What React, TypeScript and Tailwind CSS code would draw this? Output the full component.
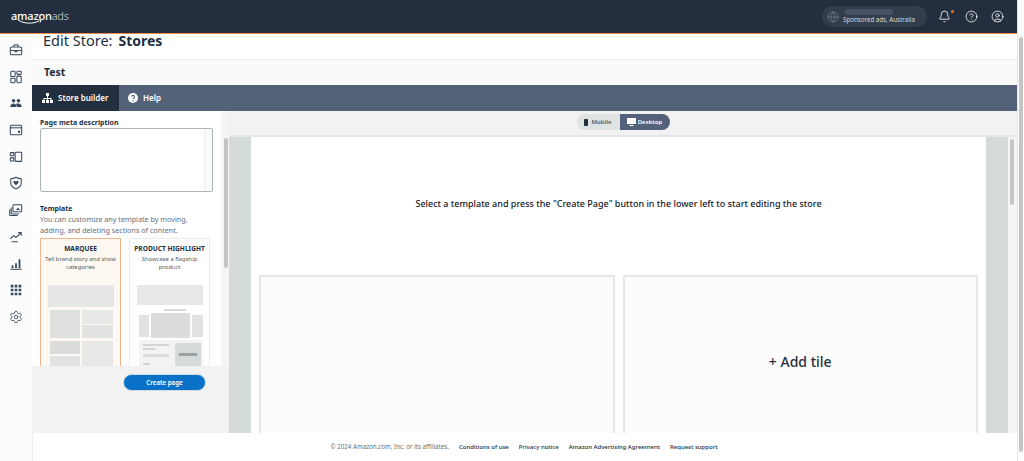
import type { ReactNode } from "react";
import { Bell, CircleHelp, CircleUser, Globe, Settings } from "lucide-react";

const FOOTER_LINKS = ["Conditions of use", "Privacy notice", "Amazon Advertising Agreement", "Request support"];

function NavIcon({ children }: { children: ReactNode }) {
  return (
    <svg width="14" height="14" viewBox="0 0 16 16" fill="none" stroke="#37475a" strokeWidth="1.2">
      {children}
    </svg>
  );
}

// rail icons are not in lucide in this shape, so they are drawn by hand
const NAV_ICONS = [
  <NavIcon key="briefcase">
    <rect x="1.5" y="4.5" width="13" height="9" rx="1.5" />
    <path d="M5.5 4.5V3a1 1 0 0 1 1-1h3a1 1 0 0 1 1 1v1.5M1.5 8.5h13M7 8.5v1.5h2V8.5" />
  </NavIcon>,
  <NavIcon key="boards">
    <rect x="2" y="1.5" width="5" height="6" rx="1" />
    <rect x="2" y="9.5" width="5" height="5" rx="1" />
    <rect x="9" y="1.5" width="5" height="3.5" rx="1" />
    <rect x="9" y="7" width="5" height="7.5" rx="1" />
  </NavIcon>,
  <NavIcon key="people">
    <g fill="#37475a" stroke="none">
      <circle cx="5.2" cy="5.5" r="2" />
      <circle cx="10.8" cy="5.5" r="2" />
      <path d="M1.5 12.5c0-2.5 1.5-4 3.7-4s3 1 3 4zM8.8 12.5c0-1.500-.3-2.700-1-3.400.8-.5 1.800-.6 3-.6 2.200 0 3.700 1.500 3.700 4z" />
    </g>
  </NavIcon>,
  <NavIcon key="wallet">
    <rect x="1.5" y="2.5" width="13" height="11" rx="1.5" />
    <path d="M1.500 5.500h13" />
    <circle cx="11.500" cy="10" r=".8" fill="#37475a" />
  </NavIcon>,
  <NavIcon key="placements">
    <rect x="1.500" y="3" width="4" height="3.500" rx=".6" />
    <rect x="1.500" y="9" width="4" height="3.500" rx=".6" />
    <rect x="7" y="2.500" width="7.500" height="10.500" rx=".8" />
  </NavIcon>,
  <NavIcon key="shield">
    <path d="M8 1.500c2 1.300 4 1.700 6 1.700v4.800c0 3.200-2.500 5.400-6 6.500-3.500-1.100-6-3.300-6-6.500V3.200c2 0 4-.4 6-1.700z" />
    <path d="M8 10.500 5.400 7.900a1.400 1.400 0 0 1 2.100-1.900l.5.500.5-.5a1.400 1.400 0 0 1 2.100 1.900z" fill="#37475a" stroke="none" />
  </NavIcon>,
  <NavIcon key="creatives">
    <rect x="4.500" y="2" width="10" height="8" rx="1" />
    <path d="M2.500 5v6.500a1 1 0 0 0 1 1h8M.8 7.500v5.800a1 1 0 0 0 1 1h8" />
    <path d="m8 8 2-2.500L13 8z" fill="#37475a" stroke="none" />
  </NavIcon>,
  <NavIcon key="trend">
    <path d="m1.500 10 4-3.500 2.500 2 5.500-5M10.500 3h3.500v3.500M3 13.500h7" />
  </NavIcon>,
  <NavIcon key="bars">
    <path d="M1.500 14h13" />
    <path d="M3 9.500h2v3H3zM7 7h2v5.500H7zM11 2.500h2v10h-2z" fill="#37475a" stroke="none" />
  </NavIcon>,
  <NavIcon key="apps">
    <path d="M2 2h3v3H2zM6.500 2h3v3h-3zM11 2h3v3h-3zM2 6.500h3v3H2zM6.500 6.500h3v3h-3zM11 6.500h3v3h-3zM2 11h3v3H2zM6.500 11h3v3h-3zM11 11h3v3h-3z" fill="#37475a" stroke="none" />
  </NavIcon>,
  <Settings key="settings" size={14} strokeWidth={1.4} className="text-[#37475a]" />,
];

function MarqueeThumb() {
  return (
    <svg width="66" height="82" viewBox="0 0 66 82" className="mt-[14px] mx-auto block">
      <rect x="0" y="0" width="66" height="4" fill="#e8e8e8" />
      <rect x="0" y="4" width="66" height="18" fill="#e6e6e6" />
      <rect x="2" y="25" width="30" height="28" fill="#dfdfdf" />
      <rect x="34" y="25" width="31" height="14" fill="#e8e8e8" />
      <rect x="34" y="40" width="31" height="13" fill="#e2e2e2" />
      <rect x="2" y="56" width="30" height="13" fill="#dcdcdc" />
      <rect x="34" y="56" width="31" height="26" fill="#e8e8e8" />
      <rect x="2" y="71" width="30" height="11" fill="#e2e2e2" />
    </svg>
  );
}

function HighlightThumb() {
  return (
    <svg width="66" height="82" viewBox="0 0 66 82" className="mt-[14px] mx-auto block">
      <rect x="0" y="0" width="66" height="4" fill="#e8e8e8" />
      <rect x="0" y="4" width="66" height="16" fill="#e8e8e8" />
      <rect x="27" y="24" width="22" height="2" fill="#d8d8d8" />
      <rect x="2" y="30" width="10" height="22" fill="#e2e2e2" />
      <rect x="14" y="28" width="39" height="25" fill="#dcdcdc" />
      <rect x="55" y="30" width="11" height="22" fill="#e2e2e2" />
      <rect x="2" y="55" width="64" height="27" fill="#f3f3f3" />
      <rect x="6" y="59" width="26" height="2" fill="#d4d4d4" />
      <rect x="6" y="63" width="12" height="2" fill="#d4d4d4" />
      <rect x="6" y="69" width="26" height="3" fill="#dddddd" />
      <rect x="6" y="78" width="7" height="2" fill="#d4d4d4" />
      <rect x="38" y="58" width="26" height="24" fill="#d5dbdb" />
      <rect x="42" y="68" width="18" height="3" fill="#9aa3a3" />
    </svg>
  );
}

export default function App() {
  return (
    <div className="w-[1024px] h-[461px] flex overflow-hidden bg-white font-['Noto_Sans',sans-serif] text-[#16191f]">
      <div className="w-[1017px] flex flex-col">
        {/* Top bar */}
        <header className="h-[34px] shrink-0 bg-[#232f3e] border-b-[1.5px] border-[#f08a4b] flex items-center pl-[11px] pr-[13px]">
          <div className="relative text-white text-[11px] leading-none tracking-[-0.2px] -mt-[2px]">
            <span className="font-medium">amazon</span>
            <span className="font-light text-[#d5dbdb]">ads</span>
            <svg width="26" height="6" viewBox="0 0 26 6" className="absolute left-[6px] top-[9px]">
              <path d="M1 1c6 4 15 4 21 1M22 1l2 .5-1 2" fill="none" stroke="#fff" strokeWidth="1" />
            </svg>
          </div>
          <div className="ml-auto w-[105px] h-[21px] rounded-full bg-[#323e4e] flex items-center pl-[5px] gap-[4px]">
            <Globe size={12} strokeWidth={1} className="text-[#8d96a3]" />
            <div className="flex flex-col gap-[1px]">
              <div className="w-[48px] h-[6px] rounded-sm bg-[#465263] ml-[2px]" />
              <div className="text-[6.2px] leading-[8px] text-[#d5dbdb]">Sponsored ads, Australia</div>
            </div>
          </div>
          <div className="ml-[11px] relative">
            <Bell size={13} strokeWidth={1.5} className="text-white" />
            <div className="absolute -right-[3px] top-[0px] w-[3px] h-[3px] rounded-full bg-[#ec7211]" />
          </div>
          <CircleHelp size={13} strokeWidth={1.5} className="text-white ml-[14px]" />
          <CircleUser size={13} strokeWidth={1.5} className="text-white ml-[13px]" />
        </header>

        <div className="flex-1 flex min-h-0">
          {/* Left rail */}
          <nav className="w-[32px] shrink-0 bg-[#fcfcfc] flex flex-col items-center pt-[9px] gap-[12.7px]">
            {NAV_ICONS}
          </nav>

          <div className="flex-1 flex flex-col min-w-0">
            <div className="flex-1 flex flex-col min-h-0">
              <div className="h-[25px] shrink-0 bg-white pl-[11px] flex items-start">
                <h1 className="text-[14.5px] leading-[13px] text-[#232f3e]">
                  Edit Store:<span className="font-bold text-[14px] ml-[6px]">Stores</span>
                </h1>
              </div>
              <div className="h-[26px] shrink-0 bg-[#fafafa] border-t border-[#eaeded] pl-[12px] flex items-center text-[10.5px] font-bold text-[#232f3e]">
                Test
              </div>

              {/* Tabs */}
              <div className="h-[26px] shrink-0 bg-[#536179] flex text-white text-[8px] font-semibold">
                <div className="w-[87px] bg-[#232f3e] flex items-center pl-[10px] gap-[5px]">
                  <svg width="11" height="10" viewBox="0 0 11 10" fill="#fff">
                    <path d="M4 0h3v3H4zM0 7h3v3H0zM4 7h3v3H4zM8 7h3v3H8zM5 3h1v2h3.500v2h-1V6H6v1H5V6H2.500v1h-1V5H5z" />
                  </svg>
                  Store builder
                </div>
                <div className="flex items-center pl-[9px] gap-[5px]">
                  <svg width="10" height="10" viewBox="0 0 10 10">
                    <circle cx="5" cy="5" r="5" fill="#fff" />
                    <path d="M3.500 3.800a1.500 1.400 0 1 1 2.300 1.200c-.6.400-.8.600-.8 1.100" fill="none" stroke="#536179" strokeWidth="1.100" />
                    <circle cx="5" cy="7.800" r=".7" fill="#536179" />
                  </svg>
                  Help
                </div>
              </div>

              <div className="flex-1 flex min-h-0">
                {/* Builder side panel */}
                <aside className="w-[197px] shrink-0 flex flex-col min-h-0">
                  <div className="flex-1 flex min-h-0 overflow-hidden">
                    <div className="flex-1 pl-[8px] pt-[6px] min-w-0">
                      <div className="text-[7px] leading-[11px] font-bold text-[#232f3e]">Page meta description</div>
                      <div className="w-[173px] h-[64px] border border-[#aab7b8] rounded-[2px] flex justify-end">
                        <div className="w-[8px] bg-[#fafafa] border-l border-[#eeeeee] rounded-r-[2px]" />
                      </div>
                      <div className="mt-[11px] text-[7px] leading-[11px] font-bold text-[#232f3e]">Template</div>
                      <p className="text-[7.2px] leading-[11px] text-[#687078] w-[170px]">
                        You can customize any template by moving, adding, and deleting sections of content.
                      </p>
                      <div className="mt-[2px] flex gap-[8px]">
                        <div className="w-[81px] h-[140px] shrink-0 border border-[#f2b48a] bg-[#fef8f2] pt-[5px] px-[4px] text-center">
                          <div className="text-[6.6px] leading-[10px] font-bold text-[#232f3e]">MARQUEE</div>
                          <div className="mt-[2px] text-[5.9px] leading-[7.500px] text-[#545b64]">Tell brand story and show categories</div>
                          <MarqueeThumb />
                        </div>
                        <div className="w-[81px] h-[140px] shrink-0 border border-[#eaeded] bg-white pt-[5px] px-[4px] text-center">
                          <div className="text-[6.6px] leading-[10px] font-bold whitespace-nowrap -mx-[4px] text-[#232f3e]">PRODUCT HIGHLIGHT</div>
                          <div className="mt-[2px] text-[5.9px] leading-[7.500px] text-[#545b64] px-[4px]">Showcase a flagship product</div>
                          <HighlightThumb />
                        </div>
                      </div>
                    </div>
                    <div className="w-[8px] shrink-0 bg-[#f5f5f5] pl-[3px] pt-[27px]">
                      <div className="w-[4px] h-[130px] rounded-full bg-[#c4c4c4]" />
                    </div>
                  </div>
                  <div className="h-[67px] shrink-0 bg-[#f2f2f2] flex justify-end items-start pt-[8px] pr-[23px]">
                    <div className="w-[83px] h-[17px] rounded-full bg-[#0972c8] border border-[#d5dbdb] flex items-center justify-center text-white text-[6.2px] font-semibold">
                      Create page
                    </div>
                  </div>
                </aside>

                {/* Canvas */}
                <div className="flex-1 flex flex-col min-w-0">
                  <div className="h-[26px] shrink-0 bg-[#f2f2f2] border-b-2 border-[#e3e7e7] flex items-center justify-center pb-[2px]">
                    <div className="flex h-[16px] rounded-full overflow-hidden text-[6.1px] font-semibold">
                      <div className="w-[43px] bg-[#dfe3e3] text-[#545b64] flex items-center justify-center gap-[3px]">
                        <div className="w-[4px] h-[7px] rounded-[1px] bg-[#232f3e]" />
                        Mobile
                      </div>
                      <div className="w-[50px] bg-[#536179] text-white flex items-center justify-center gap-[2px]">
                        <svg width="9" height="8" viewBox="0 0 9 8" fill="#fff">
                          <path d="M0 0h9v6H0zM2.500 7h4v1h-4z" />
                        </svg>
                        Desktop
                      </div>
                    </div>
                  </div>
                  <div className="flex-1 flex min-h-0">
                    <div className="flex-1 bg-[#d5dbdb] px-[22px] min-w-0 overflow-hidden">
                      <div className="h-full bg-white px-[8px]">
                        <div className="h-[138px] flex items-center justify-center text-[9px] font-medium text-[#16191f] pb-[5px]">
                          Select a template and press the "Create Page" button in the lower left to start editing the store
                        </div>
                        <div className="flex gap-[8px]">
                          <div className="flex-1 h-[200px] border-2 border-[#e6e6e6] bg-[#fcfcfc]" />
                          <div className="flex-1 h-[200px] border-2 border-[#e6e6e6] bg-[#fcfcfc] flex justify-center pt-[74px] text-[14px] font-medium text-[#232f3e]">
                            + Add tile
                          </div>
                        </div>
                      </div>
                    </div>
                    <div className="w-[9px] shrink-0 bg-[#f5f5f5] pl-[2px] pt-[2px]">
                      <div className="w-[4px] h-[66px] rounded-full bg-[#c4c4c4]" />
                    </div>
                  </div>
                </div>
              </div>
            </div>

            {/* Footer */}
            <footer className="h-[28px] shrink-0 bg-white border-l border-[#eeeeee] flex items-center justify-center gap-[10px] text-[6px] font-medium pr-[2px]">
              <span className="text-[#687078] font-normal text-[6.2px]">© 2024 Amazon.com, Inc. or its affiliates.</span>
              {FOOTER_LINKS.map((link) => (
                <span key={link} className="text-[#232f3e]">
                  {link}
                </span>
              ))}
            </footer>
          </div>
        </div>
      </div>

      {/* Page scrollbar */}
      <div className="w-[7px] shrink-0 bg-white border-l border-[#e5e5e5] pt-[37px] pl-[1px]">
        <div className="w-[4px] h-[415px] rounded-full bg-[#c4c4c4]" />
      </div>
    </div>
  );
}
